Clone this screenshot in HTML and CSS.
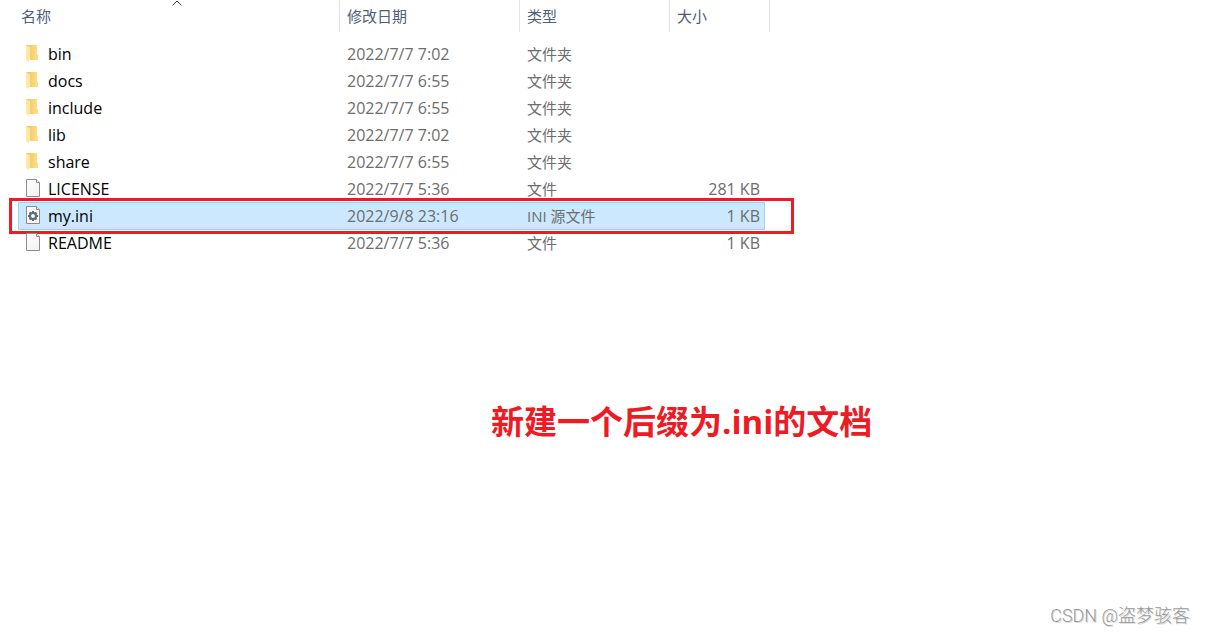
FILE: index.html
```html
<!DOCTYPE html>
<html lang="zh-CN">
<head>
  <meta charset="UTF-8" />
  <meta name="viewport" content="width=device-width, initial-scale=1.0"/>
  <title>my.ini</title>
  <link rel="stylesheet" href="styles.css">
</head>
<body>
  <svg class="symbols" aria-hidden="true">
    <defs>
      <linearGradient id="back" x1="0" x2="1">
        <stop offset="0" stop-color="#eec45f"/>
        <stop offset="1" stop-color="#ffdf87"/>
      </linearGradient>
      <linearGradient id="paper" x1="0" y1="0" x2="1" y2="1">
        <stop offset="0" stop-color="#ffffff"/>
        <stop offset="1" stop-color="#f1f1f1"/>
      </linearGradient>
      <symbol id="folder" viewBox="0 0 16 18">
        <path d="M1 1H12V11H13V16H1Z" fill="url(#back)"/>
        <path d="M1 1L4 3C5 3 5 3 5 4V16H4V18L1 16Z" fill="#ffe8a2"/>
      </symbol>
      <symbol id="file" viewBox="0 0 16 18">
        <path d="M1.5 .5H11.5L14.5 3.5V17.5H1.5Z" fill="url(#paper)" stroke="#8c8c8c"/>
        <path d="M11.5 .5V3.5H14.5" fill="#fff" stroke="#8c8c8c"/>
      </symbol>
      <symbol id="gear" viewBox="0 0 16 18">
        <use href="#file" width="16" height="18"/>
        <g stroke="#5b6b73" fill="none">
          <circle cx="8" cy="10" r="3" stroke-width="2"/>
          <path d="M8 5V7M8 13V15M3 10H5M11 10H13M4.5 6.5L6 8M10 12L11.5 13.5M11.5 6.5L10 8M6 12L4.5 13.5" stroke-width="2"/>
        </g>
      </symbol>
    </defs>
  </svg>

  <main class="page">
    <table class="files">
      <colgroup>
        <col class="col-name">
        <col class="col-date">
        <col class="col-type">
        <col class="col-size">
      </colgroup>
      <thead>
        <tr>
          <th>
            <button>名称</button>
            <svg class="sort" viewBox="0 0 10 6" aria-hidden="true"><path d="M.5 5.5L5 1L9.5 5.5" fill="none" stroke="#444"/></svg>
          </th>
          <th><button>修改日期</button></th>
          <th><button>类型</button></th>
          <th><button>大小</button></th>
        </tr>
      </thead>
      <tbody>
        <tr>
          <td class="name"><svg class="icon"><use href="#folder"/></svg>bin</td>
          <td class="date">2022/7/7 7:02</td>
          <td>文件夹</td>
          <td class="size"></td>
        </tr>
        <tr>
          <td class="name"><svg class="icon"><use href="#folder"/></svg>docs</td>
          <td class="date">2022/7/7 6:55</td>
          <td>文件夹</td>
          <td class="size"></td>
        </tr>
        <tr>
          <td class="name"><svg class="icon"><use href="#folder"/></svg>include</td>
          <td class="date">2022/7/7 6:55</td>
          <td>文件夹</td>
          <td class="size"></td>
        </tr>
        <tr>
          <td class="name"><svg class="icon"><use href="#folder"/></svg>lib</td>
          <td class="date">2022/7/7 7:02</td>
          <td>文件夹</td>
          <td class="size"></td>
        </tr>
        <tr>
          <td class="name"><svg class="icon"><use href="#folder"/></svg>share</td>
          <td class="date">2022/7/7 6:55</td>
          <td>文件夹</td>
          <td class="size"></td>
        </tr>
        <tr>
          <td class="name"><svg class="icon"><use href="#file"/></svg>LICENSE</td>
          <td class="date">2022/7/7 5:36</td>
          <td>文件</td>
          <td class="size">281 KB</td>
        </tr>
        <tr class="selected">
          <td class="name"><svg class="icon"><use href="#gear"/></svg>my.ini</td>
          <td class="date">2022/9/8 23:16</td>
          <td>INI 源文件</td>
          <td class="size">1 KB</td>
        </tr>
        <tr>
          <td class="name"><svg class="icon"><use href="#file"/></svg>README</td>
          <td class="date">2022/7/7 5:36</td>
          <td>文件</td>
          <td class="size">1 KB</td>
        </tr>
      </tbody>
    </table>

    <h1 class="note">新建一个后缀为.ini的文档</h1>
    <footer class="credit">CSDN @盗梦骇客</footer>
  </main>
</body>
</html>
```

FILE: styles.css
```css
* {
  box-sizing: border-box;
}

body {
  margin: 0;
  background-color: #fff;
  color: #6d6d6d;
  font-family: "Open Sans", "Noto Sans CJK SC", sans-serif;
  font-size: 15px;
}

.symbols {
  position: absolute;
  width: 0;
  height: 0;
}

.page {
  display: flex;
  flex-direction: column;
  min-height: 100vh;
}

.files {
  width: 752px;
  max-width: 100%;
  margin-left: 18px;
  border-collapse: separate;
  border-spacing: 0;
  table-layout: fixed;
}

.col-name {
  width: 322px;
}

.col-date {
  width: 180px;
}

.col-type {
  width: 150px;
}

.col-size {
  width: 100px;
}

th {
  position: relative;
  height: 32px;
  padding: 0 0 0 7px;
  border-right: 1px solid #e5e5e5;
  text-align: left;
}

th:first-child {
  padding-left: 3px;
}

th button {
  display: block;
  padding: 0;
  border: none;
  background: none;
  color: #4c607a;
  font: inherit;
  font-weight: 400;
  line-height: 32px;
}

.sort {
  position: absolute;
  top: 0;
  left: 50%;
  width: 10px;
  height: 6px;
  margin-left: -7px;
}

/* gap between the header and the first row */
tbody::before {
  content: "";
  display: block;
  height: 8px;
}

tbody tr {
  position: relative;
}

td {
  height: 27px;
  padding: 0 0 0 7px;
  line-height: 26px;
  white-space: nowrap;
}

.name {
  color: #000;
  font-size: 16px;
}

.date {
  font-size: 16px;
}

.size {
  padding-right: 10px;
  font-size: 16px;
  text-align: right;
}

.icon {
  width: 16px;
  height: 18px;
  margin-right: 7px;
  vertical-align: -2px;
}

.selected {
  z-index: 0;
}

.selected .name::before {
  content: "";
  position: absolute;
  inset: 0 5px -1px 0;
  z-index: -1;
  border: 1px solid #99d1ff;
  background-color: #cce8ff;
}

.selected .name::after {
  content: "";
  position: absolute;
  inset: -4px -24px -5px -9px;
  border: 3px solid #ed1c24;
}

.note {
  margin: 141px 0 0 491px;
  color: #ed1c24;
  font-size: 33px;
  line-height: 50px;
}

.credit {
  margin-top: auto;
  padding: 0 16px 6px;
  color: #999;
  font-family: Roboto, "Noto Sans CJK SC", sans-serif;
  font-size: 18px;
  font-weight: 300;
  line-height: 24px;
  text-align: right;
  text-shadow: 1px 1px 0 #ddd;
}
```
